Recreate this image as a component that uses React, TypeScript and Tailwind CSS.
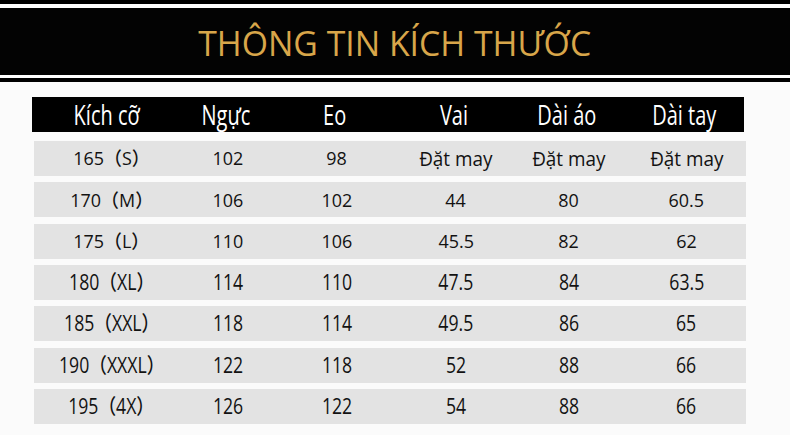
import React from "react";

const cols = ["w-[149px] pl-[6px]", "w-[90px]", "w-[128px]", "w-[110px]", "w-[116px]", "flex-1"];
const headCols = ["w-[149px]", "w-[90px]", "w-[128px]", "w-[110px]", "w-[116px]", "flex-1"];

const headers = ["Kích cỡ", "Ngực", "Eo", "Vai", "Dài áo", "Dài tay"];

const rows: string[][] = [
  ["165（S）", "102", "98", "Đặt may", "Đặt may", "Đặt may"],
  ["170（M）", "106", "102", "44", "80", "60.5"],
  ["175（L）", "110", "106", "45.5", "82", "62"],
  ["180（XL）", "114", "110", "47.5", "84", "63.5"],
  ["185（XXL）", "118", "114", "49.5", "86", "65"],
  ["190（XXXL）", "122", "118", "52", "88", "66"],
  ["195（4X）", "126", "122", "54", "88", "66"],
];

export default function App() {
  return (
    <div className="w-[790px] h-[435px] bg-[#fbfbfb] overflow-hidden" style={{ fontFamily: "'Open Sans', 'Noto Sans CJK SC', sans-serif" }}>
      <div className="h-[4px] bg-black" />
      <div className="h-[4px] bg-white" />
      <div className="h-[67px] bg-[#030303] flex items-center justify-center">
        <span className="text-[35px] font-medium leading-none text-[#d8a64a] inline-block scale-x-[0.965] pt-[2px]">THÔNG TIN KÍCH THƯỚC</span>
      </div>
      <div className="h-[3px] bg-white" />
      <div className="h-[4px] bg-black" />
      <div className="pt-[15px] pl-[32px]">
        <div className="w-[712px] h-[35px] bg-black flex items-center text-white text-[27px] font-medium leading-none">
          {headers.map((h, i) => (
            <div key={i} className={`${headCols[i]} flex justify-center`}>
              <span className="inline-block scale-x-[0.74]">{h}</span>
            </div>
          ))}
        </div>
        <div className="mt-[9px] ml-[2px] w-[712px] flex flex-col gap-[6.33px]">
          {rows.map((r, ri) => (
            <div key={ri} className="h-[35px] bg-[#e3e3e3] flex items-center text-[#121212] font-medium leading-none">
              {r.map((c, ci) => (
                <div key={ci} className={`${cols[ci]} flex justify-center`}>
                  <span
                    className={`inline-block ${
                      c === "Đặt may" ? "text-[19.5px] scale-x-[0.97]" : ri >= 3 ? "text-[21px] scale-x-[0.84]" : "text-[18.5px] scale-x-[0.97]"
                    }`}
                  >
                    {c}
                  </span>
                </div>
              ))}
            </div>
          ))}
        </div>
      </div>
    </div>
  );
}
